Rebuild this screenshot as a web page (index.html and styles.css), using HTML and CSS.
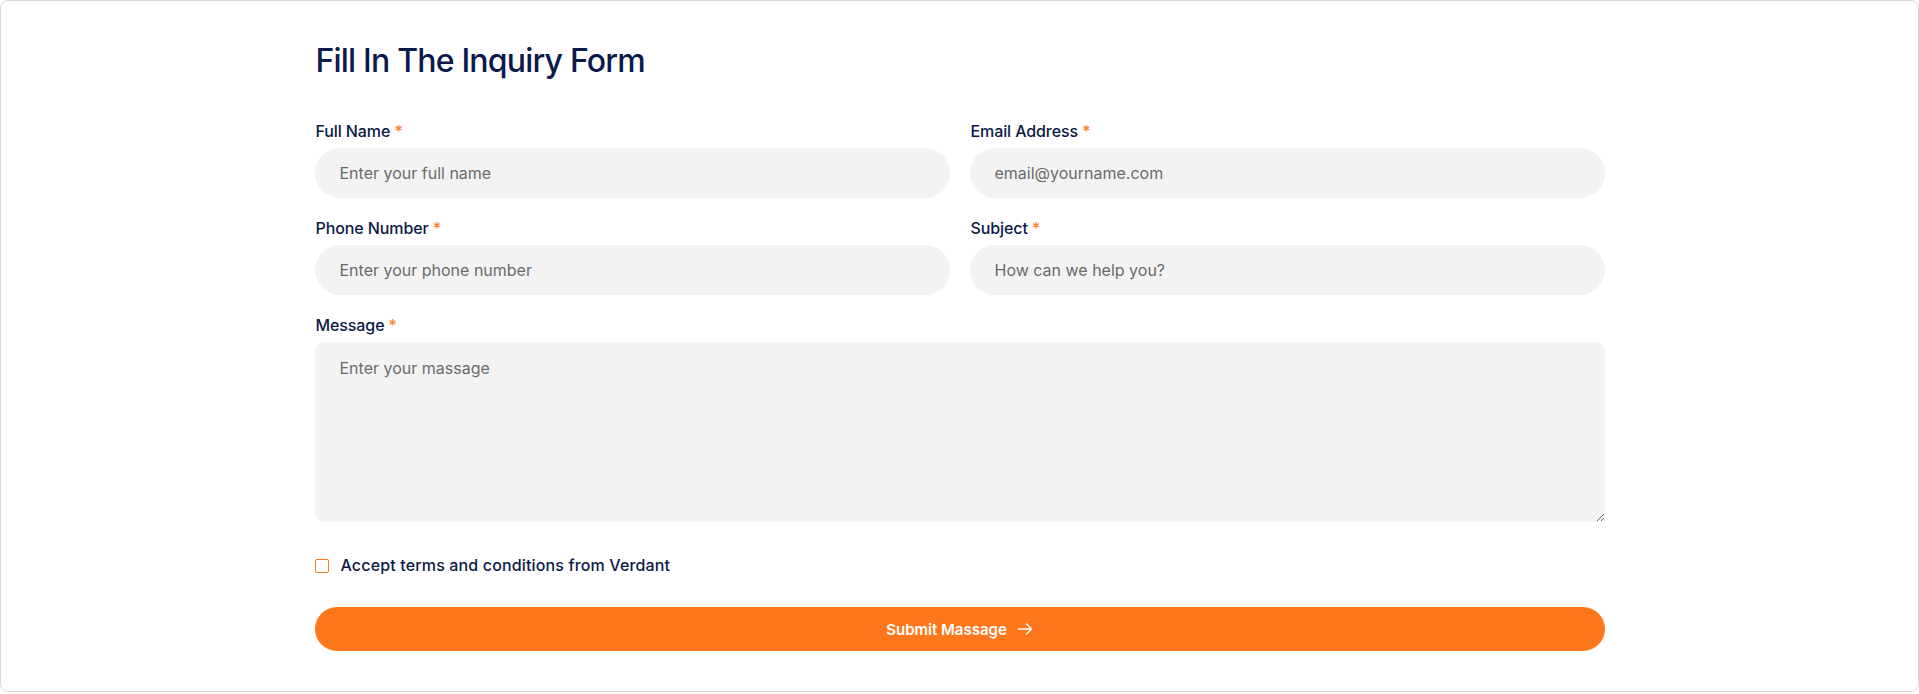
FILE: index.html
```html
<!DOCTYPE html>
<html lang="en">
<head>
<meta charset="utf-8">
<title>Inquiry Form</title>
<link rel="stylesheet" href="styles.css">
</head>
<body>
<div class="card">
  <form class="form">
    <h2 class="title">Fill In The Inquiry Form</h2>
    <div class="grid">
      <div class="field">
        <label class="label">Full Name <span class="req">*</span></label>
        <input class="input" type="text" placeholder="Enter your full name">
      </div>
      <div class="field">
        <label class="label">Email Address <span class="req">*</span></label>
        <input class="input" type="email" placeholder="email@yourname.com">
      </div>
      <div class="field">
        <label class="label">Phone Number <span class="req">*</span></label>
        <input class="input" type="text" placeholder="Enter your phone number">
      </div>
      <div class="field">
        <label class="label">Subject <span class="req">*</span></label>
        <input class="input" type="text" placeholder="How can we help you?">
      </div>
      <div class="field full">
        <label class="label">Message <span class="req">*</span></label>
        <textarea class="textarea" placeholder="Enter your massage"></textarea>
      </div>
    </div>
    <label class="check">
      <input class="box" type="checkbox">
      <span>Accept terms and conditions from Verdant</span>
    </label>
    <button class="submit" type="button">
      <span>Submit Massage</span>
      <svg width="16" height="16" viewBox="0 0 16 16" fill="none" stroke="#fff" stroke-width="1.4" stroke-linecap="round" stroke-linejoin="round"><path d="M1.5 8h13M9.5 3l5 5-5 5"/></svg>
    </button>
  </form>
</div>
</body>
</html>
```
FILE: styles.css
```css
* { box-sizing: border-box; }
html, body { margin: 0; padding: 0; background: #fff; }
body { font-family: Inter, "Noto Sans", sans-serif; color: #0b1a45; }

.card {
  height: 692px;
  border: 1px solid #d6d9e2;
  border-radius: 8px;
  padding: 41px 0 0;
}

.form {
  width: 1290px;
  margin: 0 auto;
  display: flex;
  flex-direction: column;
}

.title {
  margin: 0 0 39px;
  font-size: 32px;
  line-height: 38.4px;
  font-weight: 500;
  letter-spacing: -0.8px;
  color: #0a1a4b;
  padding-left: 1px;
}

.grid {
  display: grid;
  grid-template-columns: 1fr 1fr;
  column-gap: 20px;
  row-gap: 18px;
}

.field { display: flex; flex-direction: column; }
.field.full { grid-column: 1 / -1; }

.label {
  font-size: 16px;
  line-height: 24px;
  font-weight: 500;
  color: #0b1a45;
  margin-bottom: 5px;
  padding-left: 1px;
  letter-spacing: -0.1px;
}
.req { color: #ff7a1f; }

.input, .textarea {
  font-family: Inter, "Noto Sans", sans-serif;
  font-size: 16px;
  color: #333;
  background: #f3f3f3;
  border: none;
  outline: none;
  width: 100%;
}
.input::placeholder, .textarea::placeholder { color: #6b6b6b; opacity: 1; }

.input {
  height: 50px;
  border-radius: 25px;
  padding: 0 25px;
}

.textarea {
  height: 180px;
  border-radius: 10px;
  padding: 14px 25px;
  line-height: 24px;
  resize: vertical;
  display: block;
}

.check {
  margin-top: 31px;
  display: flex;
  align-items: center;
  gap: 12px;
  font-size: 16px;
  line-height: 24px;
  font-weight: 500;
  letter-spacing: 0.15px;
  color: #0b1a45;
}
.box {
  appearance: none;
  -webkit-appearance: none;
  margin: 1px 0 0;
  width: 14px;
  height: 14px;
  border: 1.5px solid #ff7a1f;
  border-radius: 2px;
  background: #fff;
}

.submit {
  margin-top: 30px;
  height: 44px;
  border: none;
  border-radius: 22px;
  background: #ff771d;
  color: #fff;
  font-family: Inter, "Noto Sans", sans-serif;
  font-size: 15px;
  font-weight: 600;
  display: flex;
  align-items: center;
  justify-content: center;
  gap: 10px;
  cursor: pointer;
}
```
